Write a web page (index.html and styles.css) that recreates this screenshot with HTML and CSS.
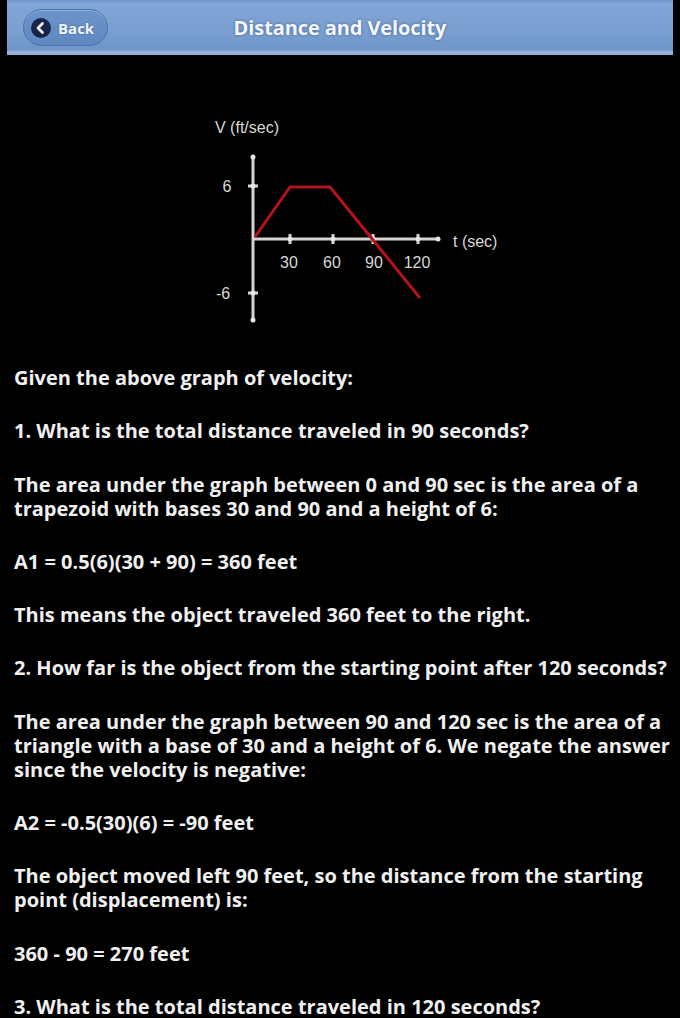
FILE: index.html
```html
<!DOCTYPE html>
<html>
<head>
<meta charset="utf-8">
<link rel="stylesheet" href="styles.css">
</head>
<body>
<header class="bar">
  <div class="bar-left">
    <a class="back-btn" href="#">
      <span class="back-icon"><svg viewBox="0 0 20 20" width="20" height="20"><circle cx="10" cy="10" r="10" fill="#16264a"/><path d="M11.5 5.5 L7 10 L11.5 14.5" fill="none" stroke="#fff" stroke-width="2.6" stroke-linecap="round" stroke-linejoin="round"/></svg></span>
      <span class="back-text">Back</span>
    </a>
  </div>
  <h1 class="bar-title">Distance and Velocity</h1>
  <div class="bar-right"></div>
</header>

<div class="figure">
  <svg class="graph" viewBox="0 0 360 220" width="360" height="220">
    <g class="axis">
      <line x1="93" y1="47" x2="93" y2="210"/>
      <line x1="93" y1="129" x2="278" y2="129"/>
      <line x1="130" y1="124" x2="130" y2="134"/>
      <line x1="173" y1="124" x2="173" y2="134"/>
      <line x1="213" y1="124" x2="213" y2="134"/>
      <line x1="258" y1="124" x2="258" y2="134"/>
      <line x1="88" y1="76" x2="98" y2="76"/>
      <line x1="88" y1="183" x2="98" y2="183"/>
    </g>
    <g class="dots">
      <circle cx="93" cy="47" r="2.5"/>
      <circle cx="93" cy="210" r="2.5"/>
      <circle cx="278" cy="129" r="2.5"/>
      <circle cx="130" cy="129" r="2.5"/>
      <circle cx="173" cy="129" r="2.5"/>
      <circle cx="213" cy="129" r="2.5"/>
      <circle cx="258" cy="129" r="2.5"/>
      <circle cx="93" cy="76" r="2.5"/>
      <circle cx="93" cy="183" r="2.5"/>
    </g>
    <polyline class="curve" points="95,127 130,77 170,77 213,130 260,188"/>
    <g class="labels">
      <text x="55" y="23">V (ft/sec)</text>
      <text x="67" y="82" text-anchor="middle">6</text>
      <text x="63" y="189" text-anchor="middle">-6</text>
      <text x="293" y="137">t (sec)</text>
      <text x="129" y="158" text-anchor="middle">30</text>
      <text x="172" y="158" text-anchor="middle">60</text>
      <text x="214" y="158" text-anchor="middle">90</text>
      <text x="257" y="158" text-anchor="middle">120</text>
    </g>
  </svg>
</div>

<main class="content">
  <p>Given the above graph of velocity:</p>
  <p>1. What is the total distance traveled in 90 seconds?</p>
  <p>The area under the graph between 0 and 90 sec is the area of a trapezoid with bases 30 and 90 and a height of 6:</p>
  <p>A1 = 0.5(6)(30 + 90) = 360 feet</p>
  <p>This means the object traveled 360 feet to the right.</p>
  <p>2. How far is the object from the starting point after 120 seconds?</p>
  <p>The area under the graph between 90 and 120 sec is the area of a triangle with a base of 30 and a height of 6. We negate the answer since the velocity is negative:</p>
  <p>A2 = -0.5(30)(6) = -90 feet</p>
  <p>The object moved left 90 feet, so the distance from the starting point (displacement) is:</p>
  <p>360 - 90 = 270 feet</p>
  <p>3. What is the total distance traveled in 120 seconds?</p>
</main>
</body>
</html>
```

FILE: styles.css
```css
html, body {
  margin: 0;
  padding: 0;
  background: #000;
}

body {
  font-family: "Open Sans", "DejaVu Sans", sans-serif;
  color: #f0f0f0;
  overflow: hidden;
}

.bar {
  margin: 0 7px;
  height: 55px;
  box-sizing: border-box;
  display: grid;
  grid-template-columns: 1fr auto 1fr;
  align-items: center;
  background: linear-gradient(#6f93c6 0px, #80a5d6 4px, #7a9fd0 30px, #7096c9 50px, #9ab8de 52px, #8aaad6 55px);
}

.bar-left {
  display: flex;
  align-items: center;
  padding-left: 16px;
}

.back-btn {
  display: flex;
  align-items: center;
  gap: 7px;
  height: 37px;
  padding: 0 13px 0 7px;
  box-sizing: border-box;
  border-radius: 19px;
  background: linear-gradient(#6d95cb, #5f88c0);
  border: 1px solid #4c74ac;
  box-shadow: inset 0 1px 0 rgba(255,255,255,0.25);
  text-decoration: none;
}

.back-icon {
  display: flex;
}

.back-text {
  font-family: "Open Sans", sans-serif;
  font-weight: 700;
  font-size: 15px;
  color: #eef3fa;
  text-shadow: 0 0 2px rgba(0,0,0,0.3);
}

.bar-title {
  margin: 0;
  font-family: "Open Sans", sans-serif;
  font-weight: 700;
  font-size: 20px;
  color: #f4f7fc;
  text-shadow: 0 0 3px rgba(20,40,80,0.5);
  letter-spacing: -0.1px;
}

.figure {
  display: flex;
  justify-content: center;
  margin-top: 55px;
}

.graph {
  display: block;
}

.axis line {
  stroke: #d4d4d4;
  stroke-width: 3;
}

.dots circle {
  fill: #e6e6e6;
}

.curve {
  fill: none;
  stroke: #b3121f;
  stroke-width: 3;
  stroke-linejoin: round;
}

.labels text {
  font-family: "Liberation Sans", Arial, sans-serif;
  font-size: 16px;
  fill: #d8d8d8;
}

.content {
  margin-top: 36px;
  padding: 0 4px 0 14px;
}

.content p {
  margin: 0 0 29.3px;
  font-size: 20px;
  line-height: 24px;
  font-weight: 700;
  letter-spacing: 0;
}
```
